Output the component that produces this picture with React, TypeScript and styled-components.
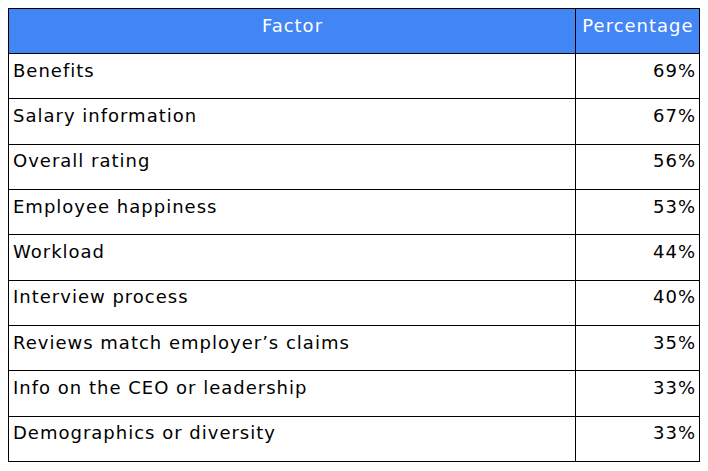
import styled, { createGlobalStyle } from "styled-components";

const GlobalStyle = createGlobalStyle`
  body {
    margin: 8px;
    padding: 0;
    background: #ffffff;
    font-family: "DejaVu Sans", "Noto Sans", Arial, sans-serif;
  }
`;

const Table = styled.table`
  width: 692px;
  border-collapse: collapse;
  table-layout: fixed;
  font-size: 18px;
  letter-spacing: 1px;
  color: #000000;
`;

const Col = styled.col<{ $width?: number }>`
  width: ${(p) => (p.$width ? `${p.$width}px` : "auto")};
`;

const Row = styled.tr<{ $height: number }>`
  height: ${(p) => p.$height}px;
`;

const HeadCell = styled.th`
  background: #4285f4;
  color: #ffffff;
  font-weight: 400;
  text-align: center;
  border: 1px solid #000000;
  padding: 0 2px 12px 3px;
  vertical-align: middle;
  white-space: nowrap;
`;

const Cell = styled.td<{ $align?: "left" | "right" }>`
  border: 1px solid #000000;
  padding: 0 3px 12px 4px;
  text-align: ${(p) => p.$align ?? "left"};
  vertical-align: middle;
  white-space: nowrap;
`;

const rows: [string, string][] = [
  ["Benefits", "69%"],
  ["Salary information", "67%"],
  ["Overall rating", "56%"],
  ["Employee happiness", "53%"],
  ["Workload", "44%"],
  ["Interview process", "40%"],
  ["Reviews match employer’s claims", "35%"],
  ["Info on the CEO or leadership", "33%"],
  ["Demographics or diversity", "33%"],
];

export default function App() {
  return (
    <>
      <GlobalStyle />
      <Table>
        <colgroup>
          <Col $width={567} />
          <Col />
        </colgroup>
        <thead>
          <Row $height={45}>
            <HeadCell>Factor</HeadCell>
            <HeadCell>Percentage</HeadCell>
          </Row>
        </thead>
        <tbody>
          {rows.map(([factor, pct]) => (
            <Row $height={45.35} key={factor}>
              <Cell>{factor}</Cell>
              <Cell $align="right">{pct}</Cell>
            </Row>
          ))}
        </tbody>
      </Table>
    </>
  );
}
